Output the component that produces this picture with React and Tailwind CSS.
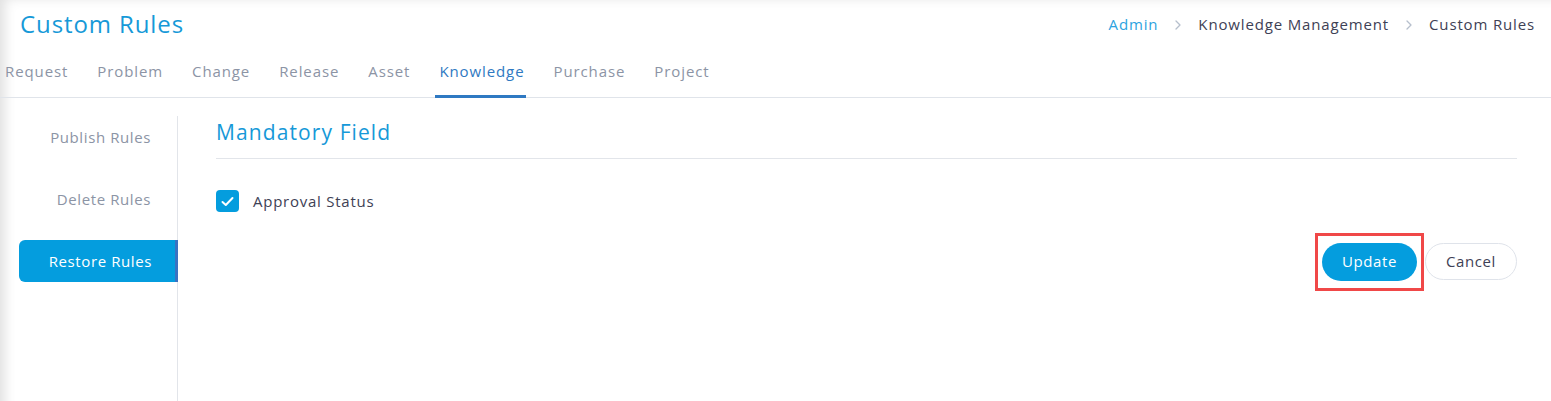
import React from 'react';

const tabs = ['Request', 'Problem', 'Change', 'Release', 'Asset', 'Knowledge', 'Purchase', 'Project'];
const rules = ['Publish Rules', 'Delete Rules', 'Restore Rules'];

const CheckIcon = () => (
  <svg width="13" height="11" viewBox="0 0 13 11" fill="none">
    <path d="M1.5 6 L4.8 9 L11.5 2" stroke="white" strokeWidth="2" strokeLinecap="round" strokeLinejoin="round" />
  </svg>
);

const Chevron = () => (
  <svg width="8" height="12" viewBox="0 0 8 12" fill="none" className="mx-[16px]">
    <path d="M2 2 L6 6 L2 10" stroke="#b6bfcc" strokeWidth="1.3" strokeLinecap="round" strokeLinejoin="round" />
  </svg>
);

const App = () => {
  const activeTab = 'Knowledge';
  const activeRule = 'Restore Rules';

  return (
    <div
      className="w-[1551px] h-[401px] bg-white overflow-hidden shadow-[inset_14px_7px_12px_-9px_rgba(0,0,0,0.12)]"
      style={{ fontFamily: '"Open Sans", "Liberation Sans", sans-serif' }}
    >
      {/* Header */}
      <div className="h-[48px] flex items-center justify-between pl-[20px] pr-[16px]">
        <h1 className="text-[24px] text-[#1699d8] tracking-[0.9px] leading-none">Custom Rules</h1>
        <div className="flex items-center text-[15px] tracking-[0.85px] pt-[1px]">
          <span className="text-[#2ca3e0]">Admin</span>
          <Chevron />
          <span className="text-[#3e4155]">Knowledge Management</span>
          <Chevron />
          <span className="text-[#3e4155]">Custom Rules</span>
        </div>
      </div>

      {/* Tabs */}
      <div className="h-[50px] flex items-stretch border-b border-[#e0e4ea] pl-[1px]">
        {tabs.map(t => (
          <div
            key={t}
            className={`flex items-center pl-[4px] pr-[2px] mr-[23px] text-[15px] tracking-[0.9px] border-b-[3px] -mb-[1px] ${
              t === activeTab ? 'text-[#2f79c2] border-[#2f79c2]' : 'text-[#8c94a5] border-transparent'
            }`}
          >
            {t}
          </div>
        ))}
      </div>

      {/* Body */}
      <div className="flex mt-[19px] h-[284px]">
        <div className="w-[178px] -mt-[1px] border-r border-[#e2e5ea] flex flex-col gap-[20px]">
          {rules.map(r => (
            <div
              key={r}
              className={`h-[42px] flex items-center justify-end text-[15px] tracking-[0.6px] ${
                r === activeRule
                  ? 'ml-[19px] -mr-[1px] bg-[#049dde] text-white font-medium rounded-l-[6px] border-r-[3px] border-[#3a72c2] pr-[23px]'
                  : 'text-[#8c94a5] pr-[26px]'
              }`}
            >
              {r}
            </div>
          ))}
        </div>

        <div className="flex-1 pl-[38px] pr-[34px]">
          <div className="h-[42px] pt-[3px] border-b border-[#e2e5ea]">
            <h2 className="text-[21px] text-[#1699d8] leading-[24px] tracking-[1.1px]">Mandatory Field</h2>
          </div>

          <div className="flex items-center mt-[31px]">
            <div className="w-[23px] h-[22px] rounded-[4px] bg-[#049dde] flex items-center justify-center">
              <CheckIcon />
            </div>
            <span className="ml-[14px] text-[15px] tracking-[0.75px] text-[#3e4155]">Approval Status</span>
          </div>

          <div className="flex justify-end items-center mt-[20px]">
            <div className="border-[3px] border-[#f04848] px-[4px] py-[7px]">
              <button className="w-[95px] h-[38px] rounded-full bg-[#049dde] text-white text-[15px] tracking-[0.6px] font-medium">
                Update
              </button>
            </div>
            <button className="ml-[1px] w-[92px] h-[37px] rounded-full border border-[#dfe3ea] bg-white text-[#3e4155] text-[15px] tracking-[0.6px]">
              Cancel
            </button>
          </div>
        </div>
      </div>
    </div>
  );
};

export default App;
